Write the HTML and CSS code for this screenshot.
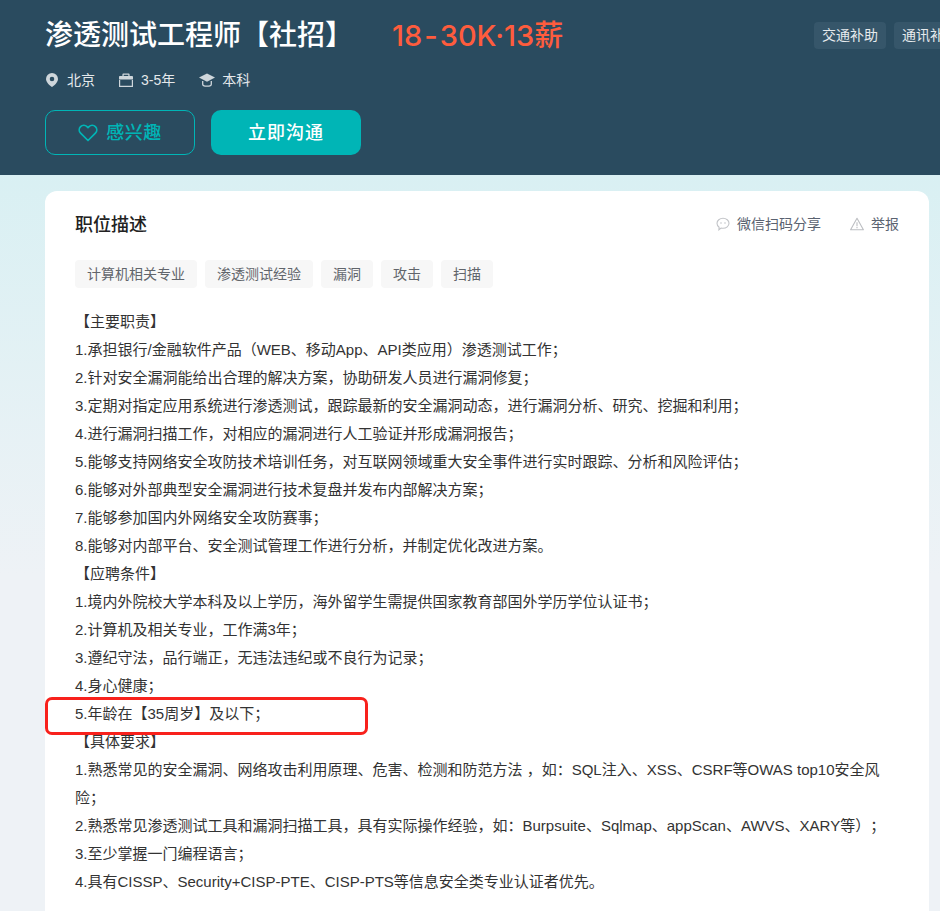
FILE: index.html
```html
<!DOCTYPE html>
<html lang="zh-CN">
<head>
<meta charset="utf-8">
<title>渗透测试工程师【社招】</title>
<link rel="stylesheet" href="styles.css">
</head>
<body>
<header class="hero">
  <div class="title-row">
    <h1 class="job-title">渗透测试工程师【社招】</h1>
    <span class="salary">18<span class="salary-dash">-</span>30K·13薪</span>
    <ul class="perks">
      <li class="perk">交通补助</li>
      <li class="perk">通讯补助</li>
    </ul>
  </div>
  <ul class="meta">
    <li class="meta-item">
      <svg class="meta-icon" viewBox="0 0 14 14"><path fill="#ced6db" fill-rule="evenodd" d="M7 0a6 6 0 0 1 6 6c0 3.400-4.200 7-6 8-1.800-1-6-4.600-6-8a6 6 0 0 1 6-6zm0 3.700a2.300 2.300 0 1 0 0 4.600 2.300 2.300 0 0 0 0-4.600z"/></svg>
      北京
    </li>
    <li class="meta-item">
      <svg class="meta-icon" viewBox="0 0 14 14"><path fill="#ced6db" d="M4.300.5h5.400c.5 0 .9.400.9.900V3H13c.5 0 1 .4 1 1v2.600H0V4c0-.6.500-1 1-1h2.400V1.400c0-.5.400-.9.900-.9zm.4 1.200V3h4.600V1.700z"/><path fill="none" stroke="#ced6db" stroke-width="1.200" d="M.6 7v6.400h12.800V7"/></svg>
      3-5年
    </li>
    <li class="meta-item">
      <svg class="meta-icon meta-icon-cap" viewBox="0 0 16 14"><path fill="#ced6db" d="M8 .5 16 4.600 8 8.700 0 4.600z"/><path fill="none" stroke="#ced6db" stroke-width="1.300" d="M3.700 8v3.200c0 1 1.900 2 4.300 2s4.300-1 4.300-2V8"/></svg>
      本科
    </li>
  </ul>
  <div class="actions">
    <button class="btn btn-outline" type="button">
      <svg class="heart" viewBox="0 0 20 18"><path fill="none" stroke="#00b5b6" stroke-width="1.700" stroke-linejoin="round" d="M10 16.500 2.600 9.200a4.700 4.700 0 0 1 0-6.600 4.500 4.500 0 0 1 6.400 0l1 1 1-1a4.500 4.500 0 0 1 6.400 0 4.700 4.700 0 0 1 0 6.600z"/></svg>
      <span class="btn-label">感兴趣</span>
    </button>
    <button class="btn btn-solid" type="button"><span class="btn-label">立即沟通</span></button>
  </div>
</header>

<main class="page">
  <section class="card">
    <div class="card-head">
      <h2 class="card-title">职位描述</h2>
      <div class="card-tools">
        <span class="tool">
          <svg class="tool-icon" viewBox="0 0 14 14"><path fill="none" stroke="#c2c4c8" stroke-width="1.100" d="M7 1.300c3.300 0 6 2.200 6 5s-2.700 5-6 5c-.7 0-1.300-.1-1.900-.3L2.900 12.800l.2-2.500C1.800 9.400 1 8 1 6.300c0-2.800 2.700-5 6-5z"/><circle cx="5" cy="6" r=".8" fill="#c2c4c8"/><circle cx="9" cy="6" r=".8" fill="#c2c4c8"/></svg>
          微信扫码分享
        </span>
        <span class="tool">
          <svg class="tool-icon" viewBox="0 0 14 14"><path fill="none" stroke="#bcbec2" stroke-width="1.100" stroke-linejoin="round" d="M7 1.300 13.400 12.700H.6z"/><path stroke="#bcbec2" stroke-width="1.100" d="M7 5.200v4M7 10v1.200"/></svg>
          举报
        </span>
      </div>
    </div>
    <ul class="tags">
      <li class="tag">计算机相关专业</li>
      <li class="tag">渗透测试经验</li>
      <li class="tag">漏洞</li>
      <li class="tag">攻击</li>
      <li class="tag">扫描</li>
    </ul>
    <div class="desc">
      <p>【主要职责】</p>
      <p>1.承担银行/金融软件产品（WEB、移动App、API类应用）渗透测试工作；</p>
      <p>2.针对安全漏洞能给出合理的解决方案，协助研发人员进行漏洞修复；</p>
      <p>3.定期对指定应用系统进行渗透测试，跟踪最新的安全漏洞动态，进行漏洞分析、研究、挖掘和利用；</p>
      <p>4.进行漏洞扫描工作，对相应的漏洞进行人工验证并形成漏洞报告；</p>
      <p>5.能够支持网络安全攻防技术培训任务，对互联网领域重大安全事件进行实时跟踪、分析和风险评估；</p>
      <p>6.能够对外部典型安全漏洞进行技术复盘并发布内部解决方案；</p>
      <p>7.能够参加国内外网络安全攻防赛事；</p>
      <p>8.能够对内部平台、安全测试管理工作进行分析，并制定优化改进方案。</p>
      <p>【应聘条件】</p>
      <p>1.境内外院校大学本科及以上学历，海外留学生需提供国家教育部国外学历学位认证书；</p>
      <p>2.计算机及相关专业，工作满3年；</p>
      <p>3.遵纪守法，品行端正，无违法违纪或不良行为记录；</p>
      <p>4.身心健康；</p>
      <p>5.年龄在【35周岁】及以下；</p>
      <p>【具体要求】</p>
      <p>1.熟悉常见的安全漏洞、网络攻击利用原理、危害、检测和防范方法 ，如：SQL注入、XSS、CSRF等OWAS top10安全风险；</p>
      <p>2.熟悉常见渗透测试工具和漏洞扫描工具，具有实际操作经验，如：Burpsuite、Sqlmap、appScan、AWVS、XARY等）；</p>
      <p>3.至少掌握一门编程语言；</p>
      <p>4.具有CISSP、Security+CISP-PTE、CISP-PTS等信息安全类专业认证者优先。</p>
    </div>
  </section>
  <div class="annotation"></div>
</main>
</body>
</html>
```

FILE: styles.css
```css
* { box-sizing: border-box; }
html, body { margin: 0; padding: 0; height: 911px; overflow: hidden; }
body {
  width: 940px;
  font-family: "Liberation Sans", "Noto Sans CJK SC", sans-serif;
  background: #fff;
  color: #333;
  text-spacing-trim: space-all;
}
ul { list-style: none; margin: 0; padding: 0; }
h1, h2, p { margin: 0; }

.hero {
  height: 175px;
  background: #2a4b5f;
  padding: 16px 0 0 45px;
  overflow: hidden;
}
.title-row {
  display: flex;
  align-items: flex-start;
  height: 41px;
  width: 1100px;
}
.job-title {
  font-size: 28px;
  line-height: 40px;
  font-weight: 500;
  color: #fff;
  width: 347px;
  white-space: nowrap;
}
.salary {
  font-family: Inter, "Noto Sans CJK SC", sans-serif;
  font-size: 29px;
  font-weight: 500;
  line-height: 40px;
  color: #fe5c3d;
  white-space: nowrap;
  width: 422px;
}
.salary-dash { margin: 0 2px; }
.perks { display: flex; gap: 8px; padding-top: 6px; }
.perk {
  height: 27px;
  line-height: 27px;
  padding: 0 8px;
  font-size: 14px;
  color: #e6eaed;
  background: #36566a;
  border-radius: 4px;
  white-space: nowrap;
}
.meta {
  display: flex;
  gap: 24px;
  margin-top: 13px;
  font-size: 14px;
  line-height: 20px;
  color: #e4e8eb;
}
.meta-item { display: flex; align-items: center; gap: 8px; }
.meta-icon { width: 14px; height: 14px; }
.meta-icon-cap { width: 16px; margin-right: -1px; }
.actions { display: flex; gap: 16px; margin-top: 20px; }
.btn {
  width: 150px;
  height: 45px;
  border-radius: 10px;
  font-family: inherit;
  font-size: 18px;
  font-weight: 500;
  letter-spacing: 1px;
  display: flex;
  align-items: center;
  justify-content: center;
  padding: 0;
}
.btn-label { position: relative; top: -2px; }
.btn-outline {
  gap: 8px;
  background: transparent;
  border: 1px solid #00b5b6;
  color: #00b5b6;
  letter-spacing: .5px;
}
.heart { width: 20px; height: 18px; }
.btn-solid { background: #00b5b6; border: 0; color: #fff; }

.page {
  position: relative;
  height: 736px;
  padding: 16px 11px 0 45px;
  background: linear-gradient(180deg, #d9f0f3 0, #eef2f6 400px);
  overflow: hidden;
}
.card {
  background: #fff;
  border-radius: 12px;
  height: 760px;
  padding: 20px 30px 0;
}
.card-head {
  display: flex;
  justify-content: space-between;
  align-items: center;
  height: 28px;
}
.card-title { font-size: 18px; line-height: 28px; font-weight: 500; color: #222; }
.card-tools { display: flex; gap: 29px; font-size: 14px; line-height: 26px; height: 28px; color: #5a6270; }
.tool { display: flex; align-items: center; gap: 7px; height: 26px; }
.tool-icon { width: 14px; height: 14px; }
.tags { display: flex; gap: 8px; margin-top: 21px; }
.tag {
  height: 28px;
  line-height: 28px;
  padding: 0 12px;
  font-size: 14px;
  color: #61656b;
  background: #f7f7f7;
  border-radius: 4px;
}
.desc { margin-top: 20px; font-size: 15px; line-height: 28px; color: #333; }
.annotation {
  position: absolute;
  left: 45px;
  top: 522px;
  width: 323px;
  height: 38px;
  border: 3px solid #f8211c;
  border-radius: 7px;
}
```
